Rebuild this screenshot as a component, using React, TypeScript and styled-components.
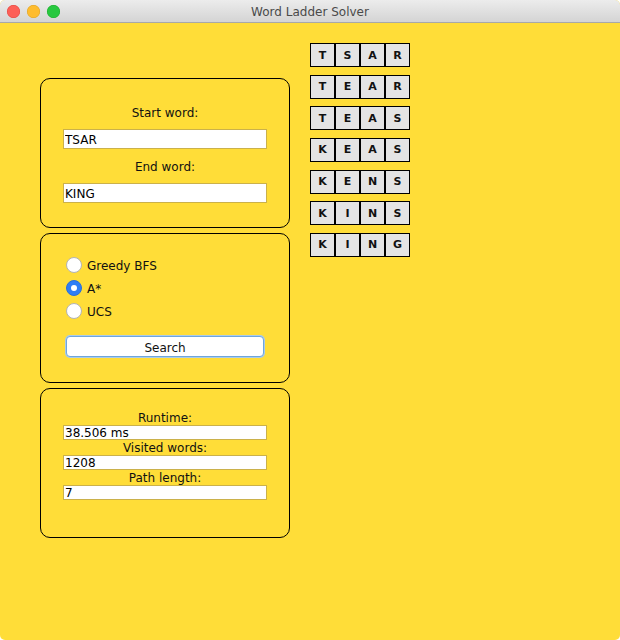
import React, { useState } from 'react';
import styled, { createGlobalStyle } from 'styled-components';

const GlobalStyle = createGlobalStyle`
  html, body {
    margin: 0;
    padding: 0;
    background: #ffffff;
  }
  body {
    font-family: "DejaVu Sans", "Liberation Sans", sans-serif;
  }
`;

const Window = styled.div`
  width: 620px;
  height: 640px;
  display: flex;
  flex-direction: column;
  overflow: hidden;
  border-radius: 5px;
  background: #ffdd38;
`;

const TitleBar = styled.div`
  flex: none;
  height: 22px;
  display: grid;
  grid-template-columns: 1fr auto 1fr;
  align-items: center;
  background: linear-gradient(#ececec, #d4d4d4);
  border-bottom: 1px solid #a8a8a8;
`;

const Lights = styled.div`
  display: flex;
  gap: 7px;
  padding-left: 7px;
`;

const Light = styled.span<{ color: string; edge: string }>`
  width: 13px;
  height: 13px;
  border-radius: 50%;
  background: ${props => props.color};
  box-shadow: inset 0 0 0 0.5px ${props => props.edge};
`;

const Title = styled.div`
  font-size: 12px;
  color: #4a4a4a;
  padding-top: 1px;
`;

const Body = styled.div`
  flex: 1;
  display: flex;
  align-items: flex-start;
  gap: 20px;
  padding: 20px 0 0 40px;
`;

const LeftColumn = styled.div`
  display: flex;
  flex-direction: column;
  gap: 5px;
  margin-top: 35px;
`;

const Panel = styled.div<{ padTop: number }>`
  box-sizing: border-box;
  width: 250px;
  height: 150px;
  border: 1px solid #000;
  border-radius: 10px;
  padding-top: ${props => props.padTop}px;
  display: flex;
  flex-direction: column;
`;

const Label = styled.div<{ gapAbove?: number }>`
  box-sizing: border-box;
  height: 15px;
  padding-top: 2px;
  line-height: 13px;
  font-size: 12px;
  color: #111;
  text-align: center;
  margin-top: ${props => props.gapAbove || 0}px;
`;

const Field = styled.input<{ tall?: boolean }>`
  box-sizing: border-box;
  width: 204px;
  height: ${props => (props.tall ? 20 : 15)}px;
  margin: ${props => (props.tall ? '9px' : '0')} auto 0;
  padding: ${props => (props.tall ? '2px' : '1px')} 0 0 1px;
  border: 1px solid #cbb14a;
  background: #fff;
  font-family: "DejaVu Sans", "Liberation Sans", sans-serif;
  font-size: 12px;
  line-height: 13px;
  color: #000;
  outline: none;
`;

const RadioList = styled.div`
  display: flex;
  flex-direction: column;
  padding-left: 25px;
`;

const RadioRow = styled.label`
  height: 23px;
  display: flex;
  align-items: center;
  gap: 5px;
  font-size: 12px;
  color: #111;
  cursor: pointer;
`;

const RadioText = styled.span`
  padding-top: 2px;
`;

const RadioDot = styled.span<{ checked: boolean }>`
  box-sizing: border-box;
  width: 16px;
  height: 16px;
  border-radius: 50%;
  display: flex;
  align-items: center;
  justify-content: center;
  background: ${props => (props.checked ? '#2f7ef5' : '#ffffff')};
  border: 1px solid ${props => (props.checked ? '#2a6fd8' : '#b3b3b3')};

  &::after {
    content: '';
    width: 6px;
    height: 6px;
    border-radius: 50%;
    background: #fff;
    display: ${props => (props.checked ? 'block' : 'none')};
  }
`;

const SearchButton = styled.button`
  box-sizing: border-box;
  width: 198px;
  height: 21px;
  margin: 14px 0 0 25px;
  padding: 2px 0 0;
  border: 1px solid #6fa6dc;
  border-radius: 4px;
  box-shadow: 0 0 0 1px #a9cbeb;
  background: #fff;
  font-family: "DejaVu Sans", "Liberation Sans", sans-serif;
  font-size: 12px;
  color: #111;
  cursor: pointer;
`;

const Ladder = styled.div`
  display: flex;
  flex-direction: column;
  gap: 7.67px;
`;

const TileRow = styled.div`
  display: flex;
`;

const Tile = styled.div`
  box-sizing: border-box;
  width: 25px;
  height: 24px;
  border: 1px solid #000;
  background: #e4e4e4;
  display: flex;
  align-items: center;
  justify-content: center;
  font-size: 11px;
  font-weight: bold;
  color: #111;
`;

const ladder = ['TSAR', 'TEAR', 'TEAS', 'KEAS', 'KENS', 'KINS', 'KING'];
const algorithms = ['Greedy BFS', 'A*', 'UCS'];

const App: React.FC = () => {
  const [algo, setAlgo] = useState('A*');

  return (
    <Window>
      <GlobalStyle />
      <TitleBar>
        <Lights>
          <Light color="#fd5f57" edge="#e0443e" />
          <Light color="#febc2e" edge="#dea123" />
          <Light color="#28c840" edge="#1aab29" />
        </Lights>
        <Title>Word Ladder Solver</Title>
        <div />
      </TitleBar>
      <Body>
        <LeftColumn>
          <Panel padTop={26}>
            <Label>Start word:</Label>
            <Field tall defaultValue="TSAR" />
            <Label gapAbove={10}>End word:</Label>
            <Field tall defaultValue="KING" />
          </Panel>

          <Panel padTop={19}>
            <RadioList>
              {algorithms.map(name => (
                <RadioRow key={name} onClick={() => setAlgo(name)}>
                  <RadioDot checked={algo === name} />
                  <RadioText>{name}</RadioText>
                </RadioRow>
              ))}
            </RadioList>
            <SearchButton>Search</SearchButton>
          </Panel>

          <Panel padTop={21}>
            <Label>Runtime:</Label>
            <Field readOnly value="38.506 ms" />
            <Label>Visited words:</Label>
            <Field readOnly value="1208" />
            <Label>Path length:</Label>
            <Field readOnly value="7" />
          </Panel>
        </LeftColumn>

        <Ladder>
          {ladder.map(word => (
            <TileRow key={word}>
              {word.split('').map((ch, i) => (
                <Tile key={i}>{ch}</Tile>
              ))}
            </TileRow>
          ))}
        </Ladder>
      </Body>
    </Window>
  );
};

export default App;
